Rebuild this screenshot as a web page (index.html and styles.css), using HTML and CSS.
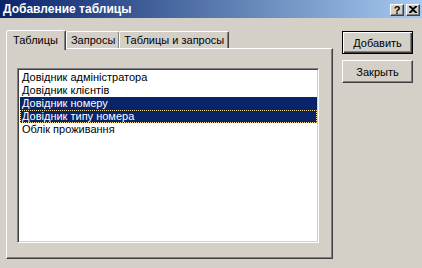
FILE: index.html
```html
<!DOCTYPE html>
<html lang="uk">
<head>
  <meta charset="UTF-8" />
  <title>Добавление таблицы</title>
  <link rel="stylesheet" href="styles.css">
</head>
<body>

<div class="window">
  <div class="titlebar">
    <span class="title">Добавление таблицы</span>
    <div class="caption-buttons">
      <span class="cap-btn help">?</span>
      <span class="cap-btn close">
        <svg width="8" height="7" viewBox="0 0 8 7"><path d="M0 0h2l2 2 2-2h2v1L5 3.5 8 6v1H6L4 5 2 7H0V6l3-2.5L0 1z" fill="#000"/></svg>
      </span>
    </div>
  </div>

  <div class="body">
    <div class="left">
      <div class="tabs">
        <div class="tab active">Таблицы</div>
        <div class="tab">Запросы</div>
        <div class="tab">Таблицы и запросы</div>
      </div>
      <div class="sheet">
        <ul class="list">
          <li>Довідник адміністратора</li>
          <li>Довідник клієнтів</li>
          <li class="selected">Довідник номеру</li>
          <li class="selected focus">Довідник типу номера</li>
          <li>Облік проживання</li>
        </ul>
      </div>
    </div>

    <div class="right">
      <button class="btn default">Добавить</button>
      <button class="btn">Закрыть</button>
    </div>
  </div>
</div>

</body>
</html>
```

FILE: styles.css
```css
body {
  margin: 0;
  padding: 0;
  background: #d4d0c8;
  font-family: 'Liberation Sans', Arial, sans-serif;
  font-size: 11px;
  color: #000;
}

.window {
  width: 422px;
  height: 268px;
  background: #d4d0c8;
  overflow: hidden;
}

/* title bar */
.titlebar {
  height: 18px;
  display: flex;
  align-items: center;
  justify-content: space-between;
  padding: 0 2px 0 3px;
  background: linear-gradient(to right, #0a246a, #a6caf0);
}

.title {
  color: #fff;
  font-weight: bold;
  font-size: 12px;
  font-family: 'Liberation Sans', Arial, sans-serif;
}

.caption-buttons {
  display: flex;
  gap: 2px;
  margin-top: 1px;
}

.cap-btn {
  width: 12px;
  height: 10px;
  display: flex;
  align-items: center;
  justify-content: center;
  background: #d4d0c8;
  border: 1px solid;
  border-color: #fff #404040 #404040 #fff;
  box-shadow: inset -1px -1px 0 #808080;
  font-weight: bold;
  font-size: 11px;
  line-height: 10px;
}

/* content */
.body {
  display: flex;
  padding: 11px 0 0 6px;
  gap: 9px;
}

.left {
  display: flex;
  flex-direction: column;
}

.tabs {
  display: flex;
  align-items: flex-end;
  height: 19px;
  position: relative;
  z-index: 1;
}

.tab {
  height: 15px;
  padding: 1px 4px 0 4px;
  border: 1px solid;
  border-bottom: none;
  border-color: #fff #404040 transparent #fff;
  box-shadow: inset -1px 0 0 #808080;
  border-radius: 2px 2px 0 0;
  line-height: 15px;
}

.tab + .tab {
  margin-left: -1px;
}

.tab.active {
  height: 19px;
  padding: 0 7px 0 6px;
  line-height: 19px;
  margin-bottom: -2px;
  background: #d4d0c8;
}

.tab.active + .tab {
  margin-left: 0;
}

.sheet {
  box-sizing: border-box;
  width: 327px;
  height: 211px;
  border: 1px solid;
  border-color: #fff #404040 #404040 #fff;
  box-shadow: inset -1px -1px 0 #808080;
  padding: 19px 0 0 10px;
}

.list {
  box-sizing: border-box;
  list-style: none;
  margin: 0;
  padding: 2px 1px;
  width: 302px;
  height: 175px;
  background: #fff;
  border: 1px solid;
  border-color: #808080 #fff #fff #808080;
  box-shadow: inset 1px 1px 0 #404040, inset -1px -1px 0 #d4d0c8;
}

.list li {
  height: 13px;
  line-height: 13px;
  padding-left: 2px;
  margin-left: 1px;
  white-space: nowrap;
}

.list li.selected {
  background: #0a246a;
  color: #fff;
}

.list li.focus {
  outline: 1px dotted #f5db95;
  outline-offset: -1px;
}

/* buttons */
.right {
  display: flex;
  flex-direction: column;
  gap: 6px;
  padding-top: 2px;
}

.btn {
  width: 71px;
  height: 23px;
  padding: 0;
  font-family: 'Liberation Sans', Arial, sans-serif;
  font-size: 11px;
  color: #000;
  background: #d4d0c8;
  border: 1px solid;
  border-color: #fff #404040 #404040 #fff;
  box-shadow: inset -1px -1px 0 #808080;
}

.btn.default {
  border: 1px solid #000;
  box-shadow: inset 1px 1px 0 #fff, inset -1px -1px 0 #404040, inset -2px -2px 0 #808080;
}
```
